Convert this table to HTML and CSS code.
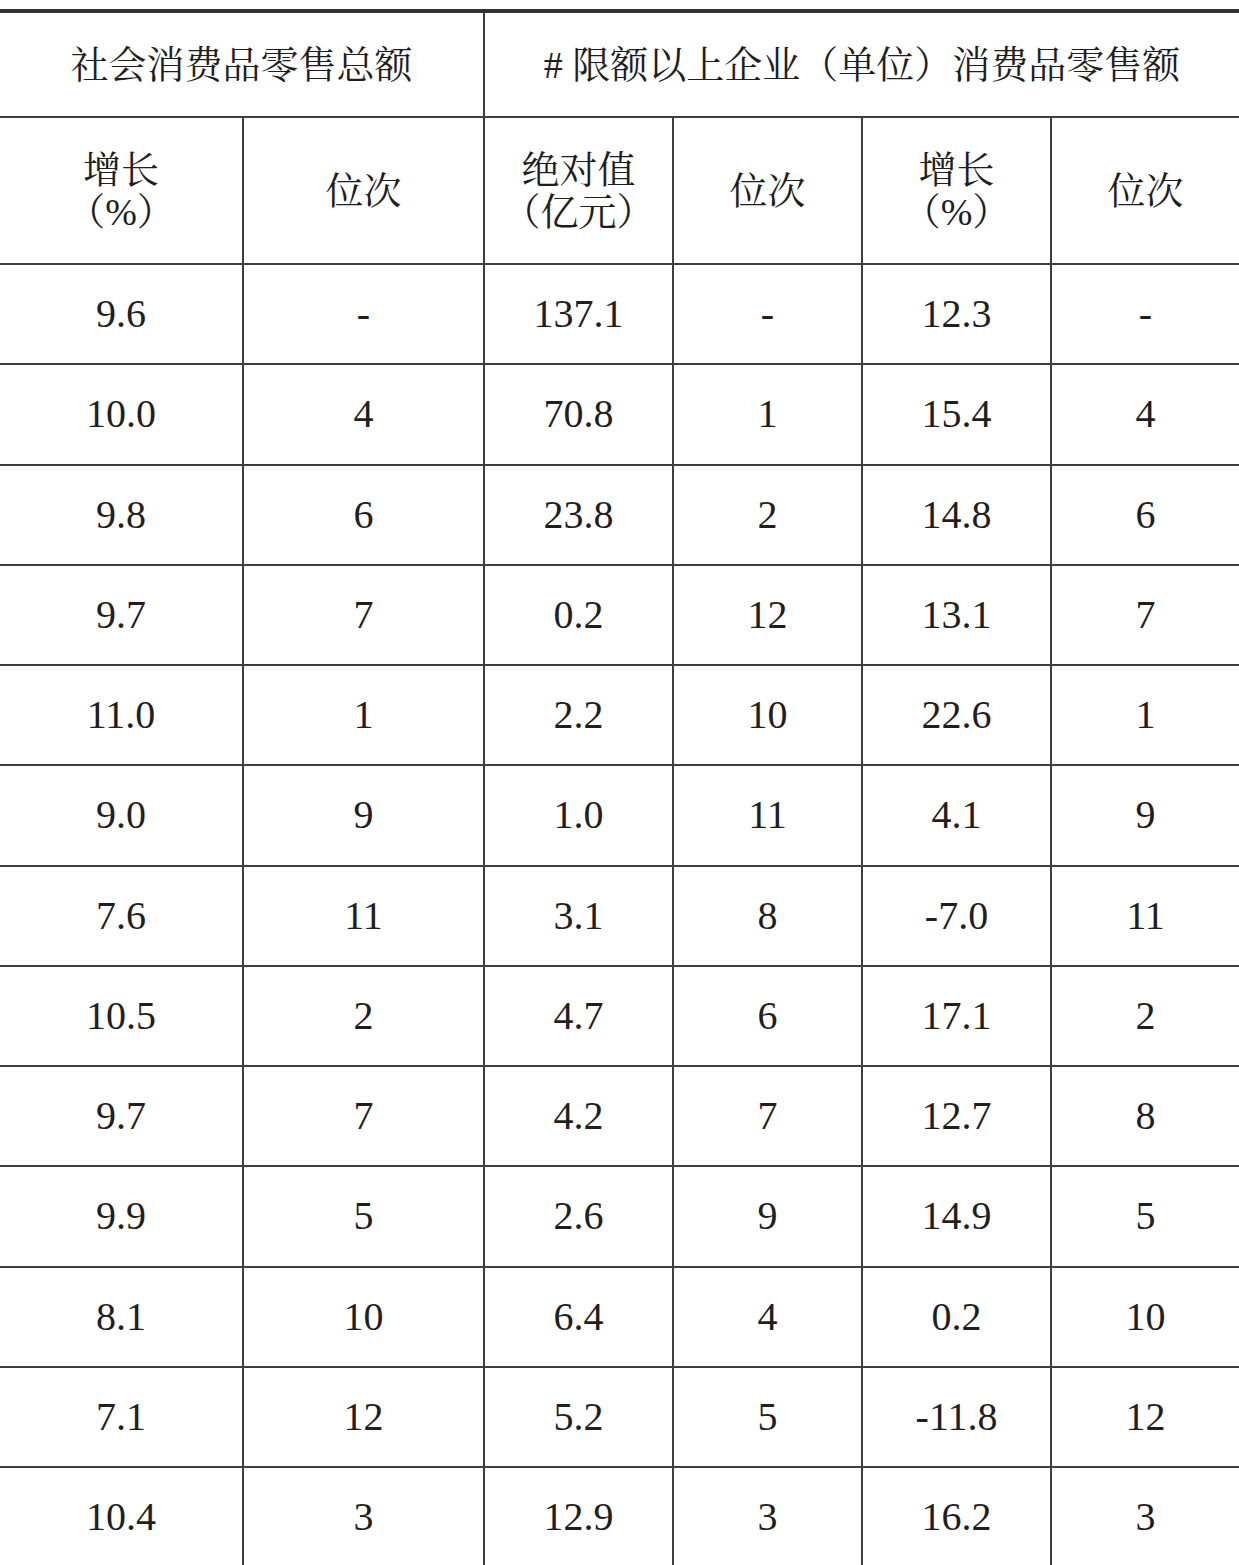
FILE: index.html
```html
<!DOCTYPE html>
<html lang="zh-CN">
<head>
<meta charset="utf-8">
<title>社会消费品零售总额</title>
<link rel="stylesheet" href="styles.css">
</head>
<body>
<div class="table">
  <div class="cell h1 span2">社会消费品零售总额</div>
  <div class="cell h1 span4"># 限额以上企业（单位）消费品零售额</div>

  <div class="cell h2"><span class="stack"><span class="ln">增长</span><span class="ln"><span class="lp">（</span><span class="pct">%</span><span class="rp">）</span></span></span></div>
  <div class="cell h2">位次</div>
  <div class="cell h2"><span class="stack"><span class="ln">绝对值</span><span class="ln"><span class="lp">（</span>亿元<span class="rp">）</span></span></span></div>
  <div class="cell h2">位次</div>
  <div class="cell h2"><span class="stack"><span class="ln">增长</span><span class="ln"><span class="lp">（</span><span class="pct">%</span><span class="rp">）</span></span></span></div>
  <div class="cell h2">位次</div>

  <div class="cell">9.6</div><div class="cell">-</div><div class="cell">137.1</div><div class="cell">-</div><div class="cell">12.3</div><div class="cell">-</div>
  <div class="cell">10.0</div><div class="cell">4</div><div class="cell">70.8</div><div class="cell">1</div><div class="cell">15.4</div><div class="cell">4</div>
  <div class="cell">9.8</div><div class="cell">6</div><div class="cell">23.8</div><div class="cell">2</div><div class="cell">14.8</div><div class="cell">6</div>
  <div class="cell">9.7</div><div class="cell">7</div><div class="cell">0.2</div><div class="cell">12</div><div class="cell">13.1</div><div class="cell">7</div>
  <div class="cell">11.0</div><div class="cell">1</div><div class="cell">2.2</div><div class="cell">10</div><div class="cell">22.6</div><div class="cell">1</div>
  <div class="cell">9.0</div><div class="cell">9</div><div class="cell">1.0</div><div class="cell">11</div><div class="cell">4.1</div><div class="cell">9</div>
  <div class="cell">7.6</div><div class="cell">11</div><div class="cell">3.1</div><div class="cell">8</div><div class="cell">-7.0</div><div class="cell">11</div>
  <div class="cell">10.5</div><div class="cell">2</div><div class="cell">4.7</div><div class="cell">6</div><div class="cell">17.1</div><div class="cell">2</div>
  <div class="cell">9.7</div><div class="cell">7</div><div class="cell">4.2</div><div class="cell">7</div><div class="cell">12.7</div><div class="cell">8</div>
  <div class="cell">9.9</div><div class="cell">5</div><div class="cell">2.6</div><div class="cell">9</div><div class="cell">14.9</div><div class="cell">5</div>
  <div class="cell">8.1</div><div class="cell">10</div><div class="cell">6.4</div><div class="cell">4</div><div class="cell">0.2</div><div class="cell">10</div>
  <div class="cell">7.1</div><div class="cell">12</div><div class="cell">5.2</div><div class="cell">5</div><div class="cell">-11.8</div><div class="cell">12</div>
  <div class="cell">10.4</div><div class="cell">3</div><div class="cell">12.9</div><div class="cell">3</div><div class="cell">16.2</div><div class="cell">3</div>
</div>
</body>
</html>
```

FILE: styles.css
```css
html, body {
  margin: 0;
  padding: 0;
  background: #ffffff;
  overflow: hidden;
}

body {
  padding-top: 9px;
  font-family: "Liberation Serif", "Times New Roman", "Noto Serif CJK SC", "Noto Sans CJK SC", serif;
  color: #1f1f1f;
}

.table {
  width: 1239px;
  display: grid;
  grid-template-columns: 242px 239px 187px 187px 187px 187px;
  grid-template-rows: 103px 145px repeat(13, 98.25px);
  column-gap: 2px;
  row-gap: 2px;
  background: #3e3e3e;
  border-top: 4px solid #333333;
}

.cell {
  background: #ffffff;
  display: flex;
  align-items: center;
  justify-content: center;
  text-align: center;
  font-size: 40px;
  line-height: 1;
  white-space: nowrap;
}

.h1, .h2 {
  font-size: 38px;
  line-height: 42px;
  color: #1e1e1e;
}

.span2 {
  grid-column: span 2;
}

.span4 {
  grid-column: span 4;
}

.stack {
  display: flex;
  flex-direction: column;
  align-items: center;
}

.ln {
  display: block;
  white-space: nowrap;
}

.lp {
  margin-left: -0.48em;
}

.rp {
  margin-right: -0.48em;
}

.pct {
  font-family: "Liberation Serif", "Times New Roman", serif;
}
```
